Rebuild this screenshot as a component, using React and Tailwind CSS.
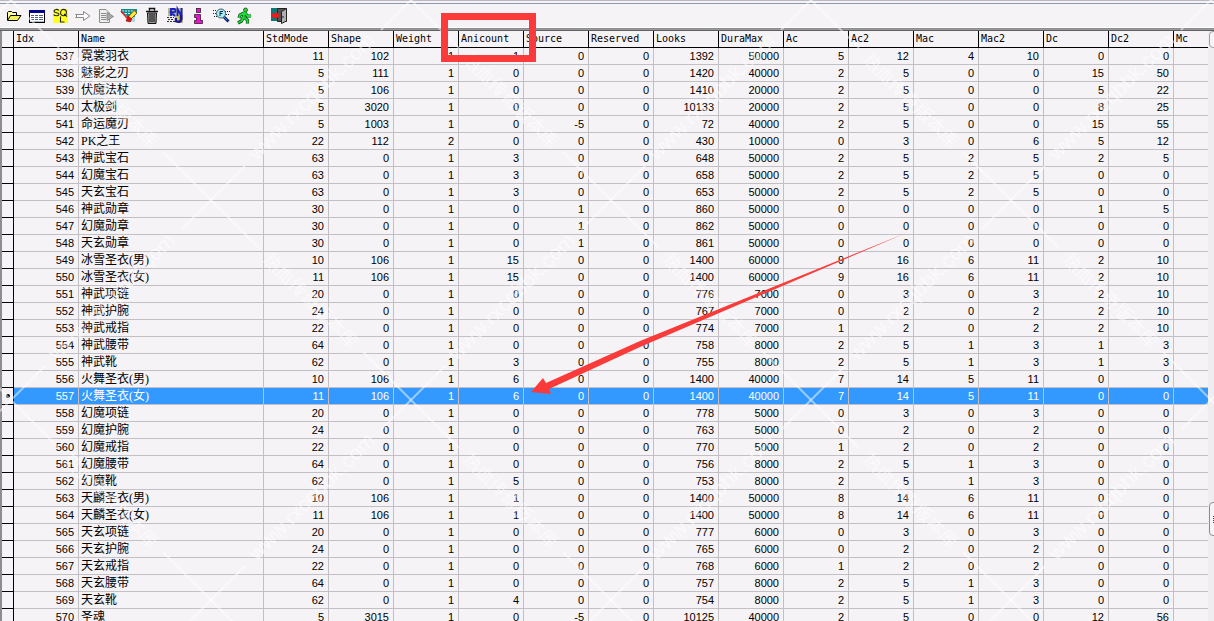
import React from "react";

const columns = [
  { name: "Idx", width: "w-[65px]" },
  { name: "Name", width: "w-[185px]" },
  { name: "StdMode", width: "w-[65px]" },
  { name: "Shape", width: "w-[65px]" },
  { name: "Weight", width: "w-[65px]" },
  { name: "Anicount", width: "w-[65px]" },
  { name: "Source", width: "w-[65px]" },
  { name: "Reserved", width: "w-[65px]" },
  { name: "Looks", width: "w-[65px]" },
  { name: "DuraMax", width: "w-[65px]" },
  { name: "Ac", width: "w-[65px]" },
  { name: "Ac2", width: "w-[65px]" },
  { name: "Mac", width: "w-[65px]" },
  { name: "Mac2", width: "w-[65px]" },
  { name: "Dc", width: "w-[65px]" },
  { name: "Dc2", width: "w-[65px]" },
  { name: "Mc", width: "" },
];

const items = [
  [537, "霓裳羽衣", 11, 102, 1, 1, 0, 0, 1392, 50000, 5, 12, 4, 10, 0, 0],
  [538, "魅影之刃", 5, 111, 1, 0, 0, 0, 1420, 40000, 2, 5, 0, 0, 15, 50],
  [539, "伏魔法杖", 5, 106, 1, 0, 0, 0, 1410, 20000, 2, 5, 0, 0, 5, 22],
  [540, "太极剑", 5, 3020, 1, 0, 0, 0, 10133, 20000, 2, 5, 0, 0, 8, 25],
  [541, "命运魔刃", 5, 1003, 1, 0, -5, 0, 72, 40000, 2, 5, 0, 0, 15, 55],
  [542, "PK之王", 22, 112, 2, 0, 0, 0, 430, 10000, 0, 3, 0, 6, 5, 12],
  [543, "神武宝石", 63, 0, 1, 3, 0, 0, 648, 50000, 2, 5, 2, 5, 2, 5],
  [544, "幻魔宝石", 63, 0, 1, 3, 0, 0, 658, 50000, 2, 5, 2, 5, 0, 0],
  [545, "天玄宝石", 63, 0, 1, 3, 0, 0, 653, 50000, 2, 5, 2, 5, 0, 0],
  [546, "神武勋章", 30, 0, 1, 0, 1, 0, 860, 50000, 0, 0, 0, 0, 1, 5],
  [547, "幻魔勋章", 30, 0, 1, 0, 1, 0, 862, 50000, 0, 0, 0, 0, 0, 0],
  [548, "天玄勋章", 30, 0, 1, 0, 1, 0, 861, 50000, 0, 0, 0, 0, 0, 0],
  [549, "冰雪圣衣(男)", 10, 106, 1, 15, 0, 0, 1400, 60000, 9, 16, 6, 11, 2, 10],
  [550, "冰雪圣衣(女)", 11, 106, 1, 15, 0, 0, 1400, 60000, 9, 16, 6, 11, 2, 10],
  [551, "神武项链", 20, 0, 1, 0, 0, 0, 776, 7000, 0, 3, 0, 3, 2, 10],
  [552, "神武护腕", 24, 0, 1, 0, 0, 0, 767, 7000, 0, 2, 0, 2, 2, 10],
  [553, "神武戒指", 22, 0, 1, 0, 0, 0, 774, 7000, 1, 2, 0, 2, 2, 10],
  [554, "神武腰带", 64, 0, 1, 0, 0, 0, 758, 8000, 2, 5, 1, 3, 1, 3],
  [555, "神武靴", 62, 0, 1, 3, 0, 0, 755, 8000, 2, 5, 1, 3, 1, 3],
  [556, "火舞圣衣(男)", 10, 106, 1, 6, 0, 0, 1400, 40000, 7, 14, 5, 11, 0, 0],
  [557, "火舞圣衣(女)", 11, 106, 1, 6, 0, 0, 1400, 40000, 7, 14, 5, 11, 0, 0],
  [558, "幻魔项链", 20, 0, 1, 0, 0, 0, 778, 5000, 0, 3, 0, 3, 0, 0],
  [559, "幻魔护腕", 24, 0, 1, 0, 0, 0, 763, 5000, 0, 2, 0, 2, 0, 0],
  [560, "幻魔戒指", 22, 0, 1, 0, 0, 0, 770, 5000, 1, 2, 0, 2, 0, 0],
  [561, "幻魔腰带", 64, 0, 1, 0, 0, 0, 756, 8000, 2, 5, 1, 3, 0, 0],
  [562, "幻魔靴", 62, 0, 1, 5, 0, 0, 753, 8000, 2, 5, 1, 3, 0, 0],
  [563, "天麟圣衣(男)", 10, 106, 1, 1, 0, 0, 1400, 50000, 8, 14, 6, 11, 0, 0],
  [564, "天麟圣衣(女)", 11, 106, 1, 1, 0, 0, 1400, 50000, 8, 14, 6, 11, 0, 0],
  [565, "天玄项链", 20, 0, 1, 0, 0, 0, 777, 6000, 0, 3, 0, 3, 0, 0],
  [566, "天玄护腕", 24, 0, 1, 0, 0, 0, 765, 6000, 0, 2, 0, 2, 0, 0],
  [567, "天玄戒指", 22, 0, 1, 0, 0, 0, 768, 6000, 1, 2, 0, 2, 0, 0],
  [568, "天玄腰带", 64, 0, 1, 0, 0, 0, 757, 8000, 2, 5, 1, 3, 0, 0],
  [569, "天玄靴", 62, 0, 1, 4, 0, 0, 754, 8000, 2, 5, 1, 3, 0, 0],
  [570, "圣魂", 5, 3015, 1, 0, -5, 0, 10125, 40000, 2, 5, 0, 0, 12, 56],
];

const selectedIdx = 557;

const tools = [
  {
    label: "Open",
    art: (
      <g stroke="#000" strokeWidth="1">
        <path d="M1.5 12V4.5L2.5 3.5H5.5L6.5 4.5H10.5V7.5" fill="#ffffa0" />
        <path d="M1.5 12.5L4.5 7.5H15L11.5 12.5Z" fill="#f2f060" />
      </g>
    ),
  },
  {
    label: "Table",
    art: (
      <g shapeRendering="crispEdges">
        <rect x="0" y="2" width="16" height="13" fill="#000" />
        <rect x="1" y="3" width="14" height="11" fill="#fff" />
        <rect x="0" y="2" width="16" height="3" fill="#000090" />
        <path d="M2 7.5h3M6 7.5h3M10 7.5h4M2 9.5h3M6 9.5h3M10 9.5h4M2 11.5h3M6 11.5h3M10 11.5h4" stroke="#506080" />
        <path d="M1 13.5h14" stroke="#b0b8c8" />
      </g>
    ),
  },
  {
    label: "SQL",
    art: (
      <g>
        <rect x="1" y="1" width="15" height="14" fill="#ffff20" />
        <g fill="none" stroke="#222" strokeWidth="1.1">
          <path d="M7 2.5C5.500 .8 2 1.200 2 3.200C2 5.200 7 4.200 7 6.300C7 8.300 3 8.200 1.600 6.600" />
          <ellipse cx="11.500" cy="4.600" rx="2.900" ry="3.200" />
          <path d="M12 6L15 8.500M8.500 8.500V14H12.500" />
        </g>
      </g>
    ),
  },
  {
    label: "Execute",
    art: <path d="M.5 6.500H8.500V3.500L15 8L8.500 12.500V9.500H.5L2 8Z" fill="#fafafa" stroke="#8a8a8a" />,
  },
  {
    label: "Run script",
    art: (
      <g fill="#eee" stroke="#8c8c8c">
        <path d="M1.500 1.500H8L11.500 5V14.500H1.500Z" />
        <path d="M3 5.500H8M3 7.500H8M3 9.500H8M3 11.500H8" />
        <path d="M9 4.500L15.500 8.500L9 12.500Z" fill="#a8a8a8" />
      </g>
    ),
  },
  {
    label: "Filter",
    art: (
      <g>
        <path d="M0 1H16V5H14V14H9V12L3 5H0Z" fill="#128a90" />
        <path d="M1 3H14M4 5.500H9" stroke="#bff" strokeDasharray="2 1" />
        <path d="M8 9H14V14H10Z" fill="#b4d8da" />
        <path d="M0 3L6 10" stroke="#d02020" strokeWidth="1.500" />
        <path d="M7 9L13 2.500L16 5L10 11Z" fill="#ffe838" stroke="#704000" strokeWidth=".8" />
        <path d="M7 8L11 11L9 14L5 13Z" fill="#e01010" stroke="#900000" strokeWidth=".5" />
      </g>
    ),
  },
  {
    label: "Delete",
    art: (
      <g stroke="#111">
        <path d="M3.500 5H12.500L12 15.500H4Z" fill="#999" />
        <path d="M2 3.500H14M5.500 2.500V.500H10.500V2.500" fill="none" strokeWidth="1.500" />
        <path d="M6 6V14M8 6V14M10 6V14" />
      </g>
    ),
  },
  {
    label: "Rename",
    art: (
      <g>
        <rect x="1" y="0" width="15" height="15" fill="#bcb884" />
        <rect x="0" y="8" width="8" height="8" fill="#f0eef2" />
        <path d="M4 8V1H7Q9 1 8 4L4 4.500L8 8M10.500 8V1L14.500 8V0" stroke="#1820d0" strokeWidth="1.800" fill="none" />
        <path d="M0 9.500H7M1 11.500H7M0 13.500H8" stroke="#333" strokeDasharray="2 1" />
        <path d="M14 7V12Q13 15 9 13V10" stroke="#181898" strokeWidth="2.500" fill="none" />
        <path d="M10 9H12V12H10Z" fill="#d8d020" />
      </g>
    ),
  },
  {
    label: "Information",
    art: (
      <g fill="#f010cc" stroke="#302030" strokeWidth=".8">
        <rect x="6.500" y=".5" width="4" height="4" />
        <path d="M4.500 6.500H10.500V12.500H12.500V15.500H4.500V12.500H6.500V9.500H4.500Z" />
      </g>
    ),
  },
  {
    label: "Find",
    art: (
      <g fill="none">
        <path d="M0 2.500H4M0 5.500H3M1 8.500H4M12 3.500H17M13 6.500H16" stroke="#222" strokeDasharray="1 1" />
        <circle cx="8" cy="5.500" r="4.500" fill="#a8f4f4" stroke="#456" />
        <path d="M7 8V3.500H10M7 5.500H9.500" stroke="#102850" />
        <path d="M11 9L15.500 13.500" stroke="#10206c" strokeWidth="3" />
        <path d="M11 9L14 12" stroke="#3890e0" strokeWidth="1" />
      </g>
    ),
  },
  {
    label: "Run",
    art: (
      <g fill="none" strokeLinejoin="round">
        <path d="M8.500 4L7.500 9L11.500 12V15.500M7.500 9L5.500 13L2 15M8 5L4 7L3 10M9 5L11.500 8H15" stroke="#103010" strokeWidth="3.200" />
        <circle cx="9.500" cy="2" r="2" fill="#20e030" stroke="#103010" strokeWidth=".7" />
        <path d="M8.500 4L7.500 9L11.500 12V15.500M7.500 9L5.500 13L2 15M8 5L4 7L3 10M9 5L11.500 8H15" stroke="#18e038" strokeWidth="2" />
      </g>
    ),
  },
  {
    label: "Exit",
    gap: true,
    art: (
      <g>
        <rect x="0" y="0" width="10" height="13" fill="#087878" />
        <path d="M6.500 .500H15.500V13.500H6.500Z" fill="#555" stroke="#222" />
        <path d="M10.500 3.500L15.500 .500V13L10.500 15.500Z" fill="#b0b0b0" stroke="#222" />
        <path d="M1 5.500H4V3L9 7.500L4 12V9.500H1Z" fill="#f01818" />
        <rect x="11.500" y="8" width="1" height="2" fill="#222" />
      </g>
    ),
  },
];

function Toolbar() {
  return (
    <header className="shrink-0 border-t border-[#b8b8be]">
      <div className="border-t-2 border-b border-t-[#f4f2f6] border-b-[#8c8c90]">
        <nav
          aria-label="Table tools"
          className="flex h-[25px] items-center border-t border-b border-t-[#8e98ac] border-b-white bg-[#f6f3f7] pt-px pl-[3px]"
        >
          {tools.map((t) => (
            <button
              key={t.label}
              type="button"
              aria-label={t.label}
              title={t.label}
              className={
                t.gap
                  ? "ml-3 flex h-5 w-[23px] items-center pl-[3px]"
                  : "flex h-5 w-[23px] items-center pl-[3px]"
              }
            >
              <svg className="size-4 shrink-0 overflow-visible" viewBox="0 0 16 16" aria-hidden="true">
                {t.art}
              </svg>
            </button>
          ))}
        </nav>
      </div>
      <div className="border-t border-b border-t-[#98989c] border-b-[#606064]" />
    </header>
  );
}

function DataRow({ row }) {
  const selected = row[0] === selectedIdx;
  return (
    <tr
      aria-selected={selected}
      className={selected ? "bg-[#3399ff] text-white" : "text-black"}
    >
      <td className="h-[17px] border-r border-b border-black bg-[#f5f3f7] p-0 align-middle">
        {selected && <span className="mx-auto block size-1 rounded-full bg-black" />}
      </td>
      {row.map((value, i) =>
        i === 1 ? (
          <td
            key={i}
            className="h-[17px] border-r border-b border-[#c2c0c4] p-0 pl-0.5 font-['Liberation_Serif','Noto_Sans_CJK_SC',serif] text-[12px] leading-4 whitespace-nowrap"
          >
            {value}
          </td>
        ) : (
          <td key={i} className="h-[17px] border-r border-b border-[#c2c0c4] p-0 pr-1 text-right">
            {value}
          </td>
        ),
      )}
      <td className="h-[17px] border-b border-[#c2c0c4] p-0" />
    </tr>
  );
}

function DataTable() {
  return (
    <table className="w-full table-fixed border-separate border-spacing-0 font-['Liberation_Sans',sans-serif] text-[11px] leading-4">
      <colgroup>
        <col className="w-3" />
        {columns.map((c) => (
          <col key={c.name} className={c.width} />
        ))}
      </colgroup>
      <thead>
        <tr>
          <th className="h-[17px] border-r border-b border-black p-0" />
          {columns.map((c) => (
            <th
              key={c.name}
              scope="col"
              className="h-[17px] border-r border-b border-black p-0 pl-0.5 text-left font-['DejaVu_Sans_Mono',monospace] text-[10px] leading-4 font-normal last:border-r-0"
            >
              {c.name}
            </th>
          ))}
        </tr>
      </thead>
      <tbody>
        {items.map((row) => (
          <DataRow key={row[0]} row={row} />
        ))}
      </tbody>
    </table>
  );
}

const tiles = [];
for (let row = -1; row < 5; row += 1) {
  for (let col = -1; col < 4; col += 1) {
    tiles.push({ x: 11 + col * 400 + (row % 2 ? 200 : 0), y: row * 200 });
  }
}

const inView = (x, y) => x > 0 && x < 1214 && y > 0 && y < 621;

function Watermark() {
  return (
    <svg
      className="pointer-events-none absolute inset-0 size-full"
      fill="#fff"
      fillOpacity="0.5"
      fontFamily="'Liberation Sans','Noto Sans CJK SC',sans-serif"
      aria-hidden="true"
    >
      {tiles.map(({ x, y }) => (
        <g key={`${x},${y}`} transform={`translate(${x} ${y})`}>
          <path
            d="M0 0L48 48M152 152L200 200M0 0L34 -34M170 -170L200 -200"
            stroke="#fff"
            strokeOpacity="0.5"
            strokeWidth="2"
          />
          {inView(x + 100, y + 100) && (
            <text transform="translate(100 100) rotate(45)" y="7" textAnchor="middle" fontSize="18">
              热血传奇版本库
            </text>
          )}
          {inView(x + 102, y - 102) && (
            <text transform="translate(102 -102) rotate(-45)" y="5" textAnchor="middle" fontSize="21">
              www.rxcqbbk.com
            </text>
          )}
        </g>
      ))}
    </svg>
  );
}

function Annotations() {
  return (
    <svg className="pointer-events-none absolute inset-0 size-full" aria-hidden="true">
      <rect x="444.500" y="16.500" width="88" height="42" fill="none" stroke="#fb3a3c" strokeWidth="7" />
      <polygon points="531,392 543,378 546,383 640,341 906,233 640,347 549,389 551,394" fill="#fb3a3a" />
    </svg>
  );
}

export default function App() {
  return (
    <main className="relative flex h-screen flex-col overflow-hidden bg-[#f6f3f7]">
      <Toolbar />
      <div className="flex min-h-0 flex-1 border-l-2 border-[#8c8c90]">
        <div className="min-w-0 flex-1 overflow-hidden">
          <DataTable />
        </div>
        <div className="flex w-1.5 shrink-0 flex-col overflow-hidden bg-[#efedf0] pl-px">
          <div className="h-[17px] w-4 shrink-0 rounded-sm border border-[#a0a0a4] bg-[#f6f4f7]" />
          <div className="flex-[455]" />
          <div className="flex h-[34px] w-4 shrink-0 flex-col items-start justify-center gap-px rounded-sm border border-[#8e8e92] bg-[#f6f4f7] pl-[3px]">
            <span className="h-px w-2 bg-[#444]" />
            <span className="h-px w-2 bg-[#444]" />
            <span className="h-px w-2 bg-[#444]" />
            <span className="h-px w-2 bg-[#444]" />
          </div>
          <div className="flex-[85]" />
        </div>
      </div>
      <Watermark />
      <Annotations />
    </main>
  );
}
